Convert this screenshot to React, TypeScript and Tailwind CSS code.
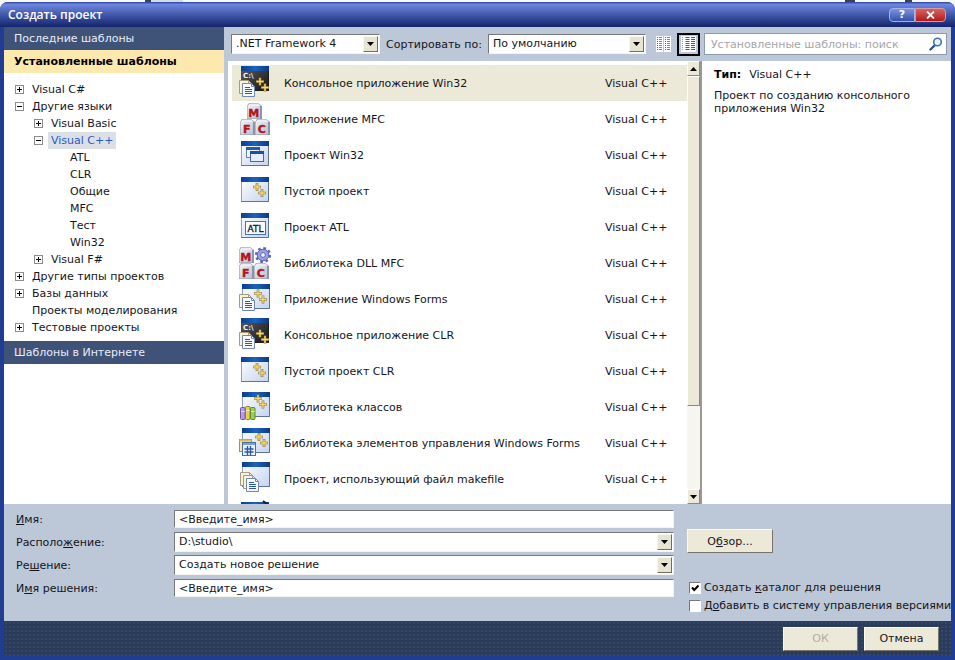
import React, { useState } from "react";

const ARROW_FRAME =
  "pointer-events-none absolute flex items-center justify-center border border-t-[#f8f7ee] border-l-[#f8f7ee] border-r-[#6f6d60] border-b-[#6f6d60] bg-[#e6e4d2]";

/* ---------- icon parts ---------- */

const WindowFrame: React.FC<{ x?: number; y: number; dark?: boolean }> = ({ x = 2, y, dark }) => (
  <g>
    <rect x={x} y={y} width="28" height="25" fill={dark ? "url(#darkBody)" : "url(#lightBody)"} />
    <rect x={x + 0.5} y={y + 0.5} width="27" height="24" fill="none" stroke={dark ? "#4c4d52" : "#8ba0c4"} />
    <path d={`M${x} ${y + 24.5}H${x + 27.5}V${y + 5}`} fill="none" stroke={dark ? "#1b1b1f" : "#5d739c"} />
    <rect x={x} y={y} width="28" height="5" fill="url(#titleFill)" />
  </g>
);

const Pluses: React.FC<{ x: number; y: number }> = ({ x, y }) => (
  <g fill="none">
    <path
      d={`M${x - 4} ${y}h8M${x} ${y - 4}v8M${x + 1} ${y + 6}h8M${x + 5} ${y + 2}v8`}
      stroke="#8f7434"
      strokeWidth="2.6"
    />
    <path
      d={`M${x - 3.5} ${y}h7M${x} ${y - 3.5}v7M${x + 1.5} ${y + 6}h7M${x + 5} ${y + 2.5}v7`}
      stroke="#fbdc6a"
      strokeWidth="1.3"
    />
  </g>
);

const Sheet: React.FC<{ x: number; y: number; back?: boolean }> = ({ x, y, back }) => (
  <g>
    <path
      d={`M${x + 0.5} ${y + 0.5}h9l3 3v10h-12z`}
      fill={back ? "#f6f2dc" : "#f7faff"}
      stroke={back ? "#a39d80" : "#7487ae"}
    />
    <path d={`M${x + 9.5} ${y + 0.5}v3h3`} fill="none" stroke={back ? "#a39d80" : "#7487ae"} />
    {!back && (
      <path
        d={`M${x + 3} ${y + 4.5}h5M${x + 3} ${y + 6.5}h7M${x + 3} ${y + 8.5}h7M${x + 3} ${y + 10.5}h7`}
        stroke="#2a57b0"
        strokeWidth="1.2"
      />
    )}
  </g>
);

const Cube: React.FC<{ x: number; y: number; letter: string }> = ({ x, y, letter }) => (
  <g>
    <path d={`M${x} ${y + 3}l2-3h9l4 3v13h-15z`} fill="#8c94a8" />
    <path d={`M${x + 0.5} ${y + 3}l2-2.5h8.5l3 2.5z`} fill="#eceef3" />
    <path d={`M${x + 0.5} ${y + 3}h12.5v12.5h-12.5z`} fill="url(#cubeFace)" />
    <text
      x={x + 6.7}
      y={y + 13.5}
      textAnchor="middle"
      fontFamily="DejaVu Sans, sans-serif"
      fontWeight="bold"
      fontSize="11"
      fill="#b3151d"
      stroke="#b3151d"
      strokeWidth="0.4"
    >
      {letter}
    </text>
  </g>
);

const ConsoleIcon = () => (
  <>
    <WindowFrame y={1} dark />
    <text x="4" y="13" fontFamily="DejaVu Sans, sans-serif" fontWeight="bold" fontSize="7" fill="#f2f2f2">
      C:\
    </text>
    <Pluses x={21} y={16.5} />
    <Sheet x={0} y={15} back />
    <Sheet x={3} y={18} />
  </>
);

const MfcIcon = () => (
  <>
    <Cube x={8} y={2} letter="M" />
    <Cube x={1} y={18} letter="F" />
    <Cube x={16} y={18} letter="C" />
  </>
);

const Win32Icon = () => (
  <>
    <WindowFrame y={4} />
    <rect x="7.5" y="10.5" width="13" height="10" fill="#f4f8ff" stroke="#6580b4" />
    <rect x="7" y="10" width="14" height="3" fill="#2259b3" />
    <rect x="11.5" y="14.5" width="13" height="10" fill="#e6eefb" stroke="#49679f" />
    <rect x="11" y="14" width="14" height="3" fill="#1b4fa6" />
  </>
);

const EmptyIcon = () => (
  <>
    <WindowFrame y={4} />
    <Pluses x={18} y={14} />
  </>
);

const AtlIcon = () => (
  <>
    <WindowFrame y={4} />
    <rect x="6.5" y="12.5" width="20" height="13" fill="#f8fbff" stroke="#4672b8" />
    <text x="16.5" y="23" textAnchor="middle" fontFamily="DejaVu Sans, sans-serif" fontSize="9" fill="#16181e" stroke="#16181e" strokeWidth="0.3">
      ATL
    </text>
  </>
);

const MfcDllIcon = () => (
  <>
    <Cube x={0} y={2} letter="M" />
    <Cube x={0} y={18} letter="F" />
    <Cube x={15} y={18} letter="C" />
    <circle cx="24" cy="10" r="6.6" fill="none" stroke="#5f64b8" strokeWidth="3" strokeDasharray="2.6 2.6" />
    <circle cx="24" cy="10" r="5.8" fill="#9a9fe0" stroke="#6166b9" />
    <circle cx="24" cy="10" r="2.4" fill="#f1f2fc" stroke="#6166b9" />
  </>
);

const FormsIcon = () => (
  <>
    <WindowFrame x={3} y={3} />
    <Pluses x={19} y={12.5} />
    <Sheet x={0} y={13} back />
    <Sheet x={3} y={16} />
  </>
);

const ClassLibIcon = () => (
  <>
    <WindowFrame x={3} y={3} />
    <Pluses x={19} y={9.5} />
    <rect x="1.5" y="18.5" width="4.5" height="12" rx="1" fill="#b79be0" stroke="#76589f" />
    <rect x="6.5" y="17.5" width="4.5" height="13" rx="1" fill="#e8cf58" stroke="#94802a" />
    <rect x="11.5" y="18.5" width="4.5" height="12" rx="1" fill="#9ccf52" stroke="#5c8a2a" />
    <path d="M2 22.5h4M7 21.5h4M12 22.5h4" stroke="#ffffff" strokeOpacity="0.6" />
  </>
);

const ControlLibIcon = () => (
  <>
    <WindowFrame x={3} y={3} />
    <Pluses x={20} y={12} />
    <rect x="0.5" y="14.5" width="12" height="12" fill="#f5e9b0" stroke="#a38e4e" />
    <rect x="0.5" y="14.5" width="12" height="2" fill="#e2bd54" />
    <rect x="3.5" y="17.5" width="13" height="13" fill="#eaf1fc" stroke="#4a6ca8" />
    <rect x="4" y="18" width="12" height="2" fill="#7f9fd6" />
    <path d="M8.5 21v9M11.5 21v9M5.5 24h9M5.5 27h9" stroke="#2e57a5" strokeWidth="1.3" />
  </>
);

const MakefileIcon = () => (
  <>
    <WindowFrame x={3} y={1} />
    <Sheet x={1} y={11} back />
    <Sheet x={4} y={14} back />
    <Sheet x={7} y={17} />
  </>
);

const NextIcon = () => (
  <>
    <WindowFrame y={5} />
    <path d="M24 4l4 3" stroke="#1c1c1c" strokeWidth="2" />
  </>
);

const templates = [
  { name: "Консольное приложение Win32", Icon: ConsoleIcon },
  { name: "Приложение MFC", Icon: MfcIcon },
  { name: "Проект Win32", Icon: Win32Icon },
  { name: "Пустой проект", Icon: EmptyIcon },
  { name: "Проект ATL", Icon: AtlIcon },
  { name: "Библиотека DLL MFC", Icon: MfcDllIcon },
  { name: "Приложение Windows Forms", Icon: FormsIcon },
  { name: "Консольное приложение CLR", Icon: ConsoleIcon },
  { name: "Пустой проект CLR", Icon: EmptyIcon },
  { name: "Библиотека классов", Icon: ClassLibIcon },
  { name: "Библиотека элементов управления Windows Forms", Icon: ControlLibIcon },
  { name: "Проект, использующий файл makefile", Icon: MakefileIcon },
  { name: "", Icon: NextIcon },
];

const tree = [
  { label: "Visual C#", indent: "pl-[11px]", box: "+" },
  { label: "Другие языки", indent: "pl-[11px]", box: "-" },
  { label: "Visual Basic", indent: "pl-[30px]", box: "+" },
  { label: "Visual C++", indent: "pl-[30px]", box: "-" },
  { label: "ATL", indent: "pl-[49px]", box: "" },
  { label: "CLR", indent: "pl-[49px]", box: "" },
  { label: "Общие", indent: "pl-[49px]", box: "" },
  { label: "MFC", indent: "pl-[49px]", box: "" },
  { label: "Тест", indent: "pl-[49px]", box: "" },
  { label: "Win32", indent: "pl-[49px]", box: "" },
  { label: "Visual F#", indent: "pl-[30px]", box: "+" },
  { label: "Другие типы проектов", indent: "pl-[11px]", box: "+" },
  { label: "Базы данных", indent: "pl-[11px]", box: "+" },
  { label: "Проекты моделирования", indent: "pl-[11px]", box: "" },
  { label: "Тестовые проекты", indent: "pl-[11px]", box: "+" },
];

/* ---------- small controls ---------- */

const Arrow: React.FC<{ up?: boolean }> = ({ up }) => (
  <svg width="7" height="4" viewBox="0 0 7 4" aria-hidden="true">
    <path d={up ? "M0 4L3.5 0L7 4z" : "M0 0H7L3.5 4z"} fill="#000" />
  </svg>
);

const Expander: React.FC<{ box: string }> = ({ box }) => (
  <svg width="9" height="9" viewBox="0 0 9 9" className="shrink-0" aria-hidden="true">
    {box && <rect x="0.5" y="0.5" width="8" height="8" fill="#fff" stroke="#8c8c8c" />}
    {box && <path d="M2 4.5h5" stroke="#000" />}
    {box === "+" && <path d="M4.5 2v5" stroke="#000" />}
  </svg>
);

interface ComboProps {
  id: string;
  label?: string;
  options: string[];
  style: string;
}

const Combo: React.FC<ComboProps> = ({ id, label, options, style }) => (
  <div className={`relative ${style}`}>
    <select
      id={id}
      aria-label={label}
      className="block h-5 w-full appearance-none border border-t-[#77787a] border-l-[#77787a] border-r-[#f4f3ee] border-b-[#f4f3ee] bg-white pr-4 pl-1 leading-4 outline-none"
    >
      {options.map((x) => (
        <option key={x}>{x}</option>
      ))}
    </select>
    <span className={`${ARROW_FRAME} top-[2px] right-[2px] h-4 w-[15px]`}>
      <Arrow />
    </span>
  </div>
);

const INPUT =
  "h-[18px] w-full border border-t-[#77787a] border-l-[#77787a] border-r-[#f4f3ee] border-b-[#f4f3ee] bg-white pl-1 leading-4 outline-none";

const PUSH_BUTTON =
  "flex h-6 items-center justify-center border border-t-[#fbfaf2] border-l-[#fbfaf2] border-r-[#77756a] border-b-[#77756a] bg-[#ece9d8]";

const SCROLL_PART =
  "flex items-center justify-center border border-t-white border-l-white border-r-[#8b897c] border-b-[#8b897c] bg-[#ece9d8]";

const App: React.FC = () => {
  const [selected, setSelected] = useState(0);
  const [node, setNode] = useState("Visual C++");

  return (
    <div className="flex h-screen flex-col bg-[#f6f7f9] font-['DejaVu_Sans',Verdana,sans-serif] text-[11px] leading-[13px] text-[#15151c]">
      {/* Edge of the window behind the dialog */}
      <div className="flex h-[2px] shrink-0 pl-[145px]">
        <span className="w-[6px] bg-[#3c4254]" />
        <span className="w-8 bg-[#cfdbe6]" />
        <span className="ml-auto w-[10px] bg-[#3c4254]" />
        <span className="mr-[43px] ml-[50px] w-[7px] bg-[#3c4254]" />
      </div>
      <div className="flex min-h-0 flex-1 flex-col overflow-hidden rounded-t-lg bg-[#213c93]">
        {/* Title bar */}
        <header className="flex h-[25px] shrink-0 items-center bg-linear-to-b from-[#2f46a4] via-[#6d86df] via-10% to-[#14246c] pr-[9px] pl-2">
          <h1 className="flex-1 font-['Open_Sans',sans-serif] text-xs font-semibold text-white">Создать проект</h1>
          <button
            type="button"
            aria-label="Справка"
            className="flex h-[14px] w-[26px] items-center justify-center rounded-l-sm border border-[#a5b3e4] bg-linear-to-b from-[#7f93dc] to-[#3450ae] text-[11px] leading-3 font-bold text-white"
          >
            ?
          </button>
          <button
            type="button"
            aria-label="Закрыть"
            className="flex h-[14px] w-[31px] items-center justify-center rounded-r-sm border border-[#d59aa8] bg-linear-to-b from-[#d8605e] to-[#b01519]"
          >
            <svg width="9" height="8" viewBox="0 0 9 8" aria-hidden="true">
              <path d="M1 0.5l7 7M8 0.5l-7 7" stroke="#fff" strokeWidth="1.8" />
            </svg>
          </button>
        </header>

        <div className="flex min-h-0 flex-1 flex-col px-1 pb-1">
          <main className="flex min-h-0 flex-1 bg-[#bcc7d8]">
            {/* Template categories */}
            <nav className="flex w-[220px] shrink-0 flex-col bg-white">
              <button type="button" className="h-[23px] bg-[#3f5277] pl-[10px] text-left text-[#e8edf8]">
                Последние шаблоны
              </button>
              <button type="button" className="h-[23px] bg-[#fde8ae] pl-[10px] text-left font-bold text-black">
                Установленные шаблоны
              </button>
              <ul className="pt-2">
                {tree.map((x) => (
                  <li key={x.label} className={`flex h-[17px] items-center gap-[5px] ${x.indent}`}>
                    <Expander box={x.box} />
                    <button
                      type="button"
                      onClick={() => setNode(x.label)}
                      className={
                        node === x.label ? "h-[17px] bg-[#dcdfe6] px-[3px] text-[#2a5cc0]" : "h-[17px] px-[3px]"
                      }
                    >
                      {x.label}
                    </button>
                  </li>
                ))}
              </ul>
              <button type="button" className="mt-[5px] h-[23px] bg-[#3f5277] pl-[10px] text-left text-[#e8edf8]">
                Шаблоны в Интернете
              </button>
            </nav>

            <div className="ml-1 flex min-w-0 flex-1 flex-col">
              {/* Toolbar */}
              <div className="flex h-[34px] shrink-0 items-center pr-1 pl-[3px]">
                <Combo id="framework" label="Версия платформы" options={[".NET Framework 4"]} style="w-[149px]" />
                <label htmlFor="sort" className="mx-[6px] whitespace-nowrap">
                  Сортировать по:
                </label>
                <Combo id="sort" options={["По умолчанию"]} style="w-[158px]" />
                <button type="button" aria-label="Мелкие значки" className="ml-[6px] flex h-[23px] w-[23px] items-center justify-center">
                  <svg width="15" height="16" viewBox="0 0 15 16" aria-hidden="true">
                    <path d="M0 0h7v16h-7zM8 0h7v16h-7z" fill="#fbfcfe" />
                    <path d="M1.5 1v14M9.5 1v14" stroke="#5c6784" strokeDasharray="1 1" />
                    <path d="M4.5 1v14M12.5 1v14" stroke="#7c86a0" strokeWidth="3" strokeDasharray="1 1" />
                  </svg>
                </button>
                <button
                  type="button"
                  aria-label="Средние значки"
                  className="ml-[2px] flex h-[23px] w-[23px] items-center justify-center border-2 border-black bg-[#bcc7d8]"
                >
                  <svg width="15" height="16" viewBox="0 0 15 16" className="shrink-0" aria-hidden="true">
                    <path d="M0 0h15v16h-15z" fill="#fbfcfe" />
                    <path d="M1.5 1v14" stroke="#8a94ac" strokeDasharray="1 1" />
                    <path d="M6.5 1v14M12 1v14" stroke="#3c5a9c" strokeWidth="4" strokeDasharray="1 1" />
                  </svg>
                </button>
                <div className="relative ml-1 min-w-0 flex-1">
                  <input
                    type="search"
                    aria-label="Поиск шаблонов"
                    placeholder="Установленные шаблоны: поиск"
                    className="block h-[22px] w-full appearance-none border border-[#8d99ae] bg-white pr-6 pl-[6px] outline-none placeholder:text-[#a6a6a6]"
                  />
                  <svg width="14" height="14" viewBox="0 0 14 14" className="absolute top-1 right-1" aria-hidden="true">
                    <path d="M1.5 12.5L6 8" stroke="#2a4f94" strokeWidth="2.4" strokeLinecap="round" />
                    <circle cx="8.5" cy="5" r="3.8" fill="#eaf4fd" stroke="#3d73b8" strokeWidth="1.6" />
                  </svg>
                </div>
              </div>

              <div className="flex min-h-0 flex-1">
                {/* Template list */}
                <div className="flex min-w-0 flex-2 bg-white">
                  <ul className="min-w-0 flex-1 overflow-y-auto pt-1 pl-1 [scrollbar-width:none]">
                    {templates.map(({ name, Icon }, index) => (
                      <li key={index}>
                        <button
                          type="button"
                          aria-label={name || "Шаблон"}
                          onClick={() => setSelected(index)}
                          className={
                            selected === index
                              ? "flex h-9 w-full items-center bg-[#ece9d9] pr-4 pl-[7px] text-left"
                              : "flex h-9 w-full items-center pr-4 pl-[7px] text-left"
                          }
                        >
                          <svg width="32" height="36" viewBox="0 0 32 36" className="mr-[13px] shrink-0" aria-hidden="true">
                            <Icon />
                          </svg>
                          <span className="flex-1 whitespace-nowrap">{name}</span>
                          {name && <span className="w-[66px]">Visual C++</span>}
                        </button>
                      </li>
                    ))}
                  </ul>
                  <div className="flex w-[15px] shrink-0 flex-col border-r-2 border-[#9a9a92] bg-[#f6f5ef]">
                    <button type="button" aria-label="Вверх" className={`${SCROLL_PART} h-[15px]`}>
                      <Arrow up />
                    </button>
                    <div className={`${SCROLL_PART} h-[330px] min-h-0`} />
                    <button type="button" aria-label="Вниз" className={`${SCROLL_PART} mt-auto h-[15px]`}>
                      <Arrow />
                    </button>
                  </div>
                </div>

                {/* Description */}
                <aside className="w-[249px] shrink-0 bg-white pt-[7px] pr-6 pl-3">
                  <p>
                    <b className="mr-2 text-black">Тип:</b>Visual C++
                  </p>
                  <p className="mt-2">Проект по созданию консольного приложения Win32</p>
                </aside>
              </div>
            </div>
          </main>

          {/* Project settings */}
          <section className="flex h-[117px] shrink-0 bg-[#bcc7d8] pt-[5px] pl-3">
            <div className="grid flex-1 auto-rows-[20px] grid-cols-[158px_1fr] content-start items-center gap-y-[3px]">
              <label htmlFor="name">
                <u>И</u>мя:
              </label>
              <input id="name" className={INPUT} defaultValue="<Введите_имя>" />
              <label htmlFor="location">
                Располо<u>ж</u>ение:
              </label>
              <Combo id="location" options={["D:\\studio\\"]} style="w-full" />
              <label htmlFor="solution">
                Ре<u>ш</u>ение:
              </label>
              <Combo id="solution" options={["Создать новое решение"]} style="w-full" />
              <label htmlFor="solutionName">
                И<u>м</u>я решения:
              </label>
              <input id="solutionName" className={INPUT} defaultValue="<Введите_имя>" />
            </div>
            <div className="ml-[13px] w-[264px] shrink-0 pt-5">
              <button type="button" className={`${PUSH_BUTTON} w-[86px]`}>
                <span>
                  О<u>б</u>зор...
                </span>
              </button>
              <div className="mt-7 flex flex-col gap-[5px] pl-[2px]">
                <label className="flex items-center gap-[3px] whitespace-nowrap">
                  <input
                    type="checkbox"
                    defaultChecked
                    className="peer h-3 w-3 shrink-0 appearance-none border border-t-[#77787a] border-l-[#77787a] border-r-white border-b-white bg-white"
                  />
                  <svg width="12" height="12" viewBox="0 0 12 12" className="-ml-[15px] hidden shrink-0 peer-checked:block" aria-hidden="true">
                    <path d="M3 5.5l2.2 2.5L9.5 3.5" fill="none" stroke="#000" strokeWidth="2" />
                  </svg>
                  <span>
                    Создать <u>к</u>аталог для решения
                  </span>
                </label>
                <label className="flex items-center gap-[3px] whitespace-nowrap">
                  <input
                    type="checkbox"
                    className="h-3 w-3 shrink-0 appearance-none border border-t-[#77787a] border-l-[#77787a] border-r-white border-b-white bg-white"
                  />
                  <span>
                    Д<u>о</u>бавить в систему управления версиями
                  </span>
                </label>
              </div>
            </div>
          </section>

          {/* Dialog buttons */}
          <footer className="flex h-[35px] shrink-0 items-center justify-end gap-[6px] bg-[#2b3b5a] bg-[radial-gradient(#34456a_1px,transparent_1px)] bg-size-[4px_4px] pr-3">
            <button type="button" disabled className={`${PUSH_BUTTON} w-[75px] text-[#b0aea2]`}>
              ОК
            </button>
            <button type="button" className={`${PUSH_BUTTON} w-[75px]`}>
              Отмена
            </button>
          </footer>
        </div>
      </div>

      {/* Shared icon gradients */}
      <svg width="0" height="0" className="absolute" aria-hidden="true">
        <defs>
          <linearGradient id="lightBody" x1="0" y1="0" x2="1" y2="1">
            <stop offset="0" stopColor="#ffffff" />
            <stop offset="1" stopColor="#c3d3f0" />
          </linearGradient>
          <linearGradient id="darkBody" x1="0" y1="0" x2="1" y2="1">
            <stop offset="0" stopColor="#5a5b60" />
            <stop offset="1" stopColor="#17171b" />
          </linearGradient>
          <linearGradient id="titleFill" x1="0" y1="0" x2="1" y2="0">
            <stop offset="0" stopColor="#0a3d8f" />
            <stop offset="0.5" stopColor="#1c62bd" />
            <stop offset="1" stopColor="#0a3a86" />
          </linearGradient>
          <linearGradient id="cubeFace" x1="0" y1="0" x2="1" y2="1">
            <stop offset="0" stopColor="#eef0f5" />
            <stop offset="1" stopColor="#b9bfcd" />
          </linearGradient>
        </defs>
      </svg>
    </div>
  );
};

export default App;
